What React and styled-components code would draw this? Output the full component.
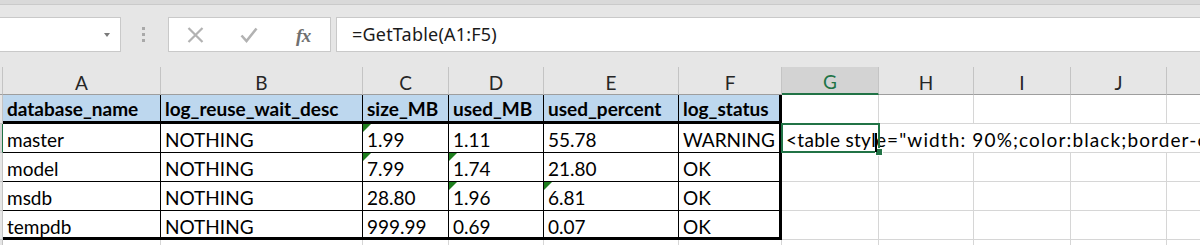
import React from "react";
import styled, { createGlobalStyle, css } from "styled-components";

const GlobalStyle = createGlobalStyle`
  html, body {
    margin: 0;
    padding: 0;
    background: #e6e6e6;
  }
  body {
    width: 1200px;
    height: 245px;
    overflow: hidden;
    font-family: Lato, "Liberation Sans", sans-serif;
  }
`;

const columns = [
  { key: "A", width: 158 },
  { key: "B", width: 202 },
  { key: "C", width: 86 },
  { key: "D", width: 95 },
  { key: "E", width: 135 },
  { key: "F", width: 103 },
  { key: "G", width: 97 },
  { key: "H", width: 95 },
  { key: "I", width: 97 },
  { key: "J", width: 96 },
  { key: "K", width: 96 },
];

const table = [
  ["database_name", "log_reuse_wait_desc", "size_MB", "used_MB", "used_percent", "log_status"],
  ["master", "NOTHING", "1.99", "1.11", "55.78", "WARNING"],
  ["model", "NOTHING", "7.99", "1.74", "21.80", "OK"],
  ["msdb", "NOTHING", "28.80", "1.96", "6.81", "OK"],
  ["tempdb", "NOTHING", "999.99", "0.69", "0.07", "OK"],
  ["", "", "", "", "", ""],
];

// cells showing the "number stored as text" marker
const flagged = ["1-2", "2-2", "2-3", "3-3", "3-4"];

const selectedRow = 1;
const selectedCol = 6;

function App() {
  return (
    <>
      <GlobalStyle />
      <Toolbar>
        <TopStrip />
        <FormulaRow>
          <NameBox>
            <Caret />
          </NameBox>
          <Grip>
            <span />
            <span />
            <span />
          </Grip>
          <FxButtons>
            <svg width="17" height="16" viewBox="0 0 17 16">
              <path d="M1.5 1 L15.5 15 M15.5 1 L1.5 15" stroke="#b2b2b2" strokeWidth="2.2" fill="none" />
            </svg>
            <svg width="18" height="16" viewBox="0 0 18 16">
              <path d="M1.5 8.5 L6.5 14 L16.5 1.5" stroke="#b2b2b2" strokeWidth="2.6" fill="none" />
            </svg>
            <FxLabel>fx</FxLabel>
          </FxButtons>
          <FormulaInput>=GetTable(A1:F5)</FormulaInput>
        </FormulaRow>
      </Toolbar>

      <Sheet>
        <Corner />
        {columns.map((c, i) => (
          <ColHead key={c.key} $active={i === selectedCol}>
            {c.key}
          </ColHead>
        ))}

        {table.map((row, r) => (
          <React.Fragment key={r}>
            <RowHead $active={r === selectedRow} />
            {columns.map((c, ci) => {
              const inTable = ci < 6 && r < 5;
              if (inTable) {
                return (
                  <Cell
                    key={c.key}
                    $inTable
                    $head={r === 0}
                    $thickRight={ci === 5}
                    $thickBottom={r === 0 || r === 4}
                    $flag={flagged.includes(`${r}-${ci}`)}
                  >
                    {row[ci]}
                  </Cell>
                );
              }
              if (r === selectedRow && ci === selectedCol) {
                return (
                  <Cell key={c.key} $selected $noRight>
                    <Spill $spacing={0.3}>{"<table styl"}</Spill>
                    <Spill $spacing={1.12}>{'e="width: 90%;color:black;border-collapse:collapse">'}</Spill>
                    <Selection>
                      <FillHandle />
                    </Selection>
                    <IBeam />
                  </Cell>
                );
              }
              return <Cell key={c.key} $noRight={r === selectedRow && ci > selectedCol} />;
            })}
          </React.Fragment>
        ))}
      </Sheet>
    </>
  );
}

const Toolbar = styled.div`
  background: #e6e6e6;
`;

const TopStrip = styled.div`
  height: 4px;
  background: #d9d9d9;
  border-bottom: 1px solid #cacaca;
`;

const FormulaRow = styled.div`
  display: flex;
  align-items: flex-start;
  height: 34px;
  padding: 12px 0 16px;
`;

const Box = styled.div`
  box-sizing: border-box;
  height: 35px;
  background: #fff;
  border: 1px solid #c9c9c9;
`;

const NameBox = styled(Box)`
  position: relative;
  width: 122px;
  margin-left: -1px;
`;

const Caret = styled.span`
  position: absolute;
  left: 104px;
  top: 15px;
  border-left: 3.5px solid transparent;
  border-right: 3.5px solid transparent;
  border-top: 4px solid #7a7a7a;
`;

const Grip = styled.div`
  display: flex;
  flex-direction: column;
  gap: 3px;
  margin: 10px 23px 0 21px;
  span {
    width: 3px;
    height: 3px;
    background: #a9a9a9;
  }
`;

const FxButtons = styled(Box)`
  width: 163px;
  display: flex;
  align-items: center;
  gap: 36px;
  padding-left: 18px;
  svg {
    display: block;
  }
`;

const FxLabel = styled.span`
  font-family: "Liberation Serif", serif;
  font-style: italic;
  font-weight: 700;
  font-size: 19px;
  color: #707070;
  margin-left: 2px;
  margin-top: 2px;
  letter-spacing: -0.5px;
`;

const FormulaInput = styled(Box)`
  flex: 1;
  margin-left: 5px;
  border-right: none;
  padding-left: 15px;
  font-family: "Noto Sans", "Open Sans", sans-serif;
  font-size: 18px;
  letter-spacing: 0.2px;
  line-height: 32px;
  color: #1a1a1a;
`;

const Sheet = styled.div`
  display: grid;
  grid-template-columns: 3px ${columns.map((c) => `${c.width}px`).join(" ")};
  grid-template-rows: 28px repeat(6, 29px);
  width: 1200px;
  height: 178px;
  overflow: hidden;
  background: #fff;
  font-size: 19px;
  color: #000;
`;

const Corner = styled.div`
  box-sizing: border-box;
  background: #e6e6e6;
  border-right: 1px solid #c4c4c4;
  border-bottom: 1px solid #9e9e9e;
`;

const ColHead = styled.div`
  box-sizing: border-box;
  background: #e6e6e6;
  border-right: 1px solid #c4c4c4;
  border-bottom: 1px solid #9e9e9e;
  text-align: center;
  font-size: 19px;
  line-height: 31px;
  color: #262626;
  ${(p) =>
    p.$active &&
    css`
      background: #d3d3d3;
      color: #217346;
      border-bottom: 2px solid #217346;
      line-height: 30px;
    `}
`;

const RowHead = styled.div`
  box-sizing: border-box;
  background: #e6e6e6;
  border-right: 1px solid #c4c4c4;
  border-bottom: 1px solid #c4c4c4;
  ${(p) =>
    p.$active &&
    css`
      background: #d3d3d3;
      border-right: 1px solid #217346;
    `}
`;

const Cell = styled.div`
  position: relative;
  box-sizing: border-box;
  padding: ${(p) => (p.$head ? "1px" : "3px")} 0 0 4px;
  line-height: 26px;
  white-space: nowrap;
  font-weight: ${(p) => (p.$head ? 700 : 400)};
  background: ${(p) => (p.$head ? "#bdd7ee" : p.$inTable ? "#fff" : "transparent")};
  border-right: ${(p) =>
    p.$noRight ? "none" : p.$inTable ? `${p.$thickRight ? 3 : 1}px solid #000` : "1px solid #d6d6d6"};
  border-bottom: ${(p) => (p.$inTable ? `${p.$thickBottom ? 3 : 1}px solid #000` : "1px solid #d6d6d6")};
  ${(p) =>
    p.$selected &&
    css`
      z-index: 2;
    `}
  ${(p) =>
    p.$flag &&
    css`
      &::before {
        content: "";
        position: absolute;
        top: 0;
        left: 0;
        border-top: 8px solid #1e7e1e;
        border-right: 8px solid transparent;
      }
    `}
`;

const Spill = styled.span`
  letter-spacing: ${(p) => p.$spacing}px;
`;

const Selection = styled.div`
  position: absolute;
  top: -1px;
  left: -1px;
  width: 99px;
  bottom: -1px;
  border: 2px solid #217346;
  box-sizing: border-box;
  pointer-events: none;
`;

const FillHandle = styled.span`
  position: absolute;
  right: -5px;
  bottom: -5px;
  width: 6px;
  height: 6px;
  background: #217346;
  border: 1px solid #fff;
`;

const IBeam = styled.span`
  position: absolute;
  left: 93px;
  top: 9px;
  width: 2px;
  height: 19px;
  background: #000;
`;

export default App;
